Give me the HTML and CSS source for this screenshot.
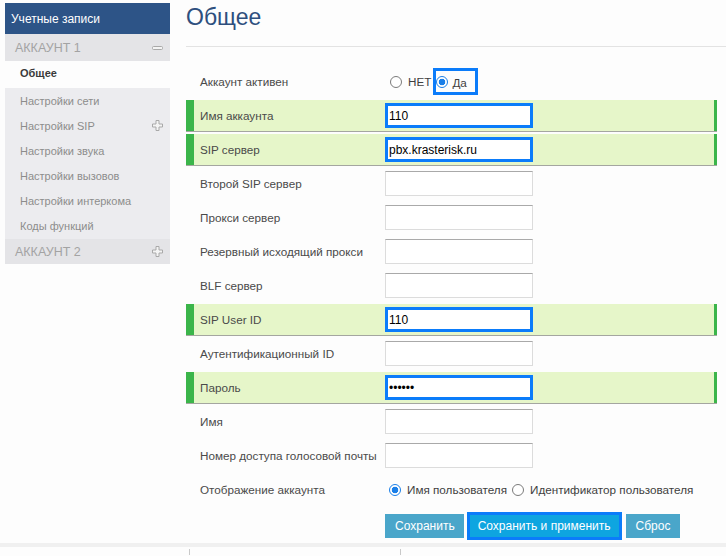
FILE: index.html
```html
<!DOCTYPE html>
<html lang="ru">
<head>
<meta charset="utf-8">
<title>Общее</title>
<link rel="stylesheet" href="styles.css">
</head>
<body>
<div class="page">
  <aside class="sidebar">
    <div class="sb-head">Учетные записи</div>
    <div class="sb-acc">АККАУНТ 1
      <svg class="ico" width="11" height="4" viewBox="0 0 11 4"><rect x="0.5" y="0.5" width="10" height="3" rx="1" fill="#f4f4f4" stroke="#a9a9a9"/></svg>
    </div>
    <div class="sb-active">Общее</div>
    <ul class="sb-list">
      <li>Настройки сети</li>
      <li>Настройки SIP
        <svg class="ico" width="11" height="11" viewBox="0 0 11 11"><path d="M4 0.5h3v3.5h3.5v3h-3.5v3.5h-3v-3.5h-3.5v-3h3.5z" fill="#f4f4f4" stroke="#a9a9a9"/></svg>
      </li>
      <li>Настройки звука</li>
      <li>Настройки вызовов</li>
      <li>Настройки интеркома</li>
      <li>Коды функций</li>
    </ul>
    <div class="sb-acc sb-acc2">АККАУНТ 2
      <svg class="ico" width="11" height="11" viewBox="0 0 11 11"><path d="M4 0.5h3v3.5h3.5v3h-3.5v3.5h-3v-3.5h-3.5v-3h3.5z" fill="#f4f4f4" stroke="#a9a9a9"/></svg>
    </div>
  </aside>

  <main class="main">
    <h1 class="title">Общее</h1>
    <form class="form">
      <div class="row">
        <label class="lbl">Аккаунт активен</label>
        <div class="opts">
          <input class="rd rd-first" type="radio" name="act"><span class="opt-t">НЕТ</span>
          <span class="hlbox"><input class="rd" type="radio" name="act" checked><span class="opt-t2">Да</span></span>
        </div>
      </div>
      <div class="row req">
        <label class="lbl">Имя аккаунта</label>
        <input class="fld hl" type="text" value="110">
      </div>
      <div class="row req">
        <label class="lbl">SIP сервер</label>
        <input class="fld hl" type="text" value="pbx.krasterisk.ru">
      </div>
      <div class="row">
        <label class="lbl">Второй SIP сервер</label>
        <input class="fld" type="text">
      </div>
      <div class="row">
        <label class="lbl">Прокси сервер</label>
        <input class="fld" type="text">
      </div>
      <div class="row">
        <label class="lbl">Резервный исходящий прокси</label>
        <input class="fld" type="text">
      </div>
      <div class="row">
        <label class="lbl">BLF сервер</label>
        <input class="fld" type="text">
      </div>
      <div class="row req">
        <label class="lbl">SIP User ID</label>
        <input class="fld hl" type="text" value="110">
      </div>
      <div class="row">
        <label class="lbl">Аутентификационный ID</label>
        <input class="fld" type="text">
      </div>
      <div class="row req">
        <label class="lbl">Пароль</label>
        <input class="fld hl" type="password" value="123456">
      </div>
      <div class="row">
        <label class="lbl">Имя</label>
        <input class="fld" type="text">
      </div>
      <div class="row">
        <label class="lbl">Номер доступа голосовой почты</label>
        <input class="fld" type="text">
      </div>
      <div class="row">
        <label class="lbl">Отображение аккаунта</label>
        <div class="opts">
          <input class="rd rd-first2" type="radio" name="disp" checked><span class="opt-t">Имя пользователя</span>
          <input class="rd" type="radio" name="disp"><span class="opt-t">Идентификатор пользователя</span>
        </div>
      </div>
      <div class="actions">
        <button type="button" class="btn btn-save">Сохранить</button>
        <button type="button" class="btn primary">Сохранить и применить</button>
        <button type="button" class="btn">Сброс</button>
      </div>
    </form>
  </main>
</div>
<footer class="foot"><span class="mark"></span><span class="mark mark2"></span></footer>
</body>
</html>
```
FILE: styles.css
```css
* { box-sizing: border-box; }

body {
  margin: 0;
  width: 726px;
  height: 556px;
  overflow: hidden;
  background: #fdfdfd;
  font-family: "Liberation Sans", Arial, sans-serif;
  font-size: 11.7px;
  color: #4a4a4a;
}

.page {
  display: flex;
  align-items: flex-start;
}

/* Sidebar */
.sidebar {
  flex: none;
  width: 165px;
  margin: 3px 0 0 5px;
}

.sb-head {
  height: 31px;
  background: #2d5487;
  color: #fff;
  font-size: 12px;
  padding-left: 6px;
  display: flex;
  align-items: center;
}

.sb-acc {
  height: 27px;
  background: #e4e4e7;
  color: #a3a3a3;
  font-size: 12.5px;
  display: flex;
  align-items: center;
  justify-content: space-between;
  padding: 0 7px 0 10px;
}

.sb-acc2 { height: 25px; }

.ico { display: block; }

.sb-active {
  height: 27px;
  padding: 0 0 3px 15px;
  display: flex;
  align-items: center;
  font-size: 11px;
  font-weight: bold;
  color: #3a3a3a;
}

.sb-list {
  list-style: none;
  margin: 0;
  padding: 0 0 1px;
  background: #ececef;
}

.sb-list li {
  height: 25px;
  display: flex;
  align-items: center;
  justify-content: space-between;
  padding: 0 7px 0 15px;
  font-size: 11px;
  color: #8c8c8c;
}

/* Main */
.main {
  flex: 1;
  min-width: 0;
  margin-left: 16px;
}

.title {
  margin: 0;
  height: 47px;
  padding-top: 3px;
  border-bottom: 1px solid #e3e3e3;
  font-size: 23px;
  line-height: 28px;
  font-weight: normal;
  color: #2e4f7e;
}

.form {
  margin-top: 19px;
  width: 531px;
}

.row {
  display: flex;
  align-items: center;
  height: 32px;
  margin-bottom: 2px;
  border-bottom: 1px solid transparent;
}

.row.req {
  background: #e6f6c9;
  border-bottom-color: #a4a6a0;
  box-shadow: inset 8px 0 0 #3bb54a, inset -3px 0 0 #3bb54a;
}

.lbl {
  flex: none;
  width: 199px;
  padding-left: 14px;
  color: #4a4a4a;
}

.fld {
  width: 148px;
  height: 25px;
  margin: 0;
  padding: 0 3px;
  border: 1px solid #dcdcdc;
  border-top-color: #a9a9a9;
  background: #fff;
  font-family: "Liberation Sans", Arial, sans-serif;
  font-size: 12px;
  color: #000;
  outline: none;
}

.fld.hl {
  border: 3px solid #0b7cfa;
  padding: 0 1px;
}

.opts {
  display: flex;
  align-items: center;
  color: #3f3f3f;
}

.rd {
  appearance: none;
  -webkit-appearance: none;
  flex: none;
  width: 12px;
  height: 12px;
  margin: 0;
  border: 1px solid #7b7b7b;
  border-radius: 50%;
  background: #fff;
}

.rd:checked {
  border-color: #1a7fe8;
  background: radial-gradient(circle, #1a7fe8 0 3px, #fff 3.6px);
}

.rd-first { margin-left: 5px; }
.rd-first2 { margin-left: 4px; }

.opt-t { margin: 0 5px 0 6px; }
.opt-t2 { margin: 2px 8px 0 4px; }

.hlbox {
  display: flex;
  align-items: center;
  height: 27px;
  border: 3px solid #0b7cfa;
  margin-left: -3px;
}

.actions {
  display: flex;
  align-items: center;
  margin-top: 6px;
  padding-left: 199px;
  height: 28px;
}

.btn {
  height: 24px;
  padding: 0 10px;
  border: 0;
  background: #4aa6ca;
  color: #fff;
  font-family: "Liberation Sans", Arial, sans-serif;
  font-size: 12px;
}

.btn-save { padding: 0 9px 0 10px; }

.btn.primary {
  height: 28px;
  margin: 0 4px 0 3px;
  padding: 0 8px;
  background: #0ea5e0;
  border: 3px solid #0b7cfa;
}

/* Footer */
.foot {
  margin-top: 3px;
  height: 12px;
  border-top: 4px solid #f0f0f0;
  display: flex;
  align-items: flex-end;
  padding-left: 189px;
}

.mark {
  width: 1px;
  height: 6px;
  background: #c9c9c9;
}

.mark2 { margin-left: 210px; }
```
